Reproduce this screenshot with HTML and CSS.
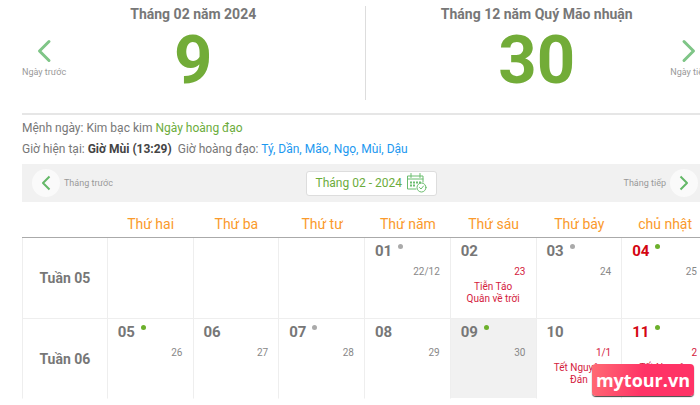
FILE: index.html
```html
<!DOCTYPE html>
<html lang="vi">
<head>
<meta charset="utf-8">
<title>Lịch tháng 02 - 2024</title>
<link rel="stylesheet" href="styles.css">
</head>
<body>
<main class="calendar">
  <section class="days">
    <div class="day">
      <h2>Tháng 02 năm 2024</h2>
      <p class="big">9</p>
      <a class="step prev" href="#"><svg width="16" height="24" viewBox="0 0 16 24"><path d="M13 2.500 3.500 12l9.500 9.500"/></svg><span>Ngày trước</span></a>
    </div>
    <div class="day">
      <h2>Tháng 12 năm Quý Mão nhuận</h2>
      <p class="big">30</p>
      <a class="step next" href="#"><svg width="16" height="24" viewBox="0 0 16 24"><path d="m3 2.500 9.500 9.500L3 21.500"/></svg><span>Ngày tiếp</span></a>
    </div>
  </section>
  <section class="info">
    <p>Mệnh ngày: Kim bạc kim <span class="good">Ngày hoàng đạo</span></p>
    <p>Giờ hiện tại: <b>Giờ Mùi (13:29)</b> <span class="hours">Giờ hoàng đạo: <span class="blue">Tý, Dần, Mão, Ngọ, Mùi, Dậu</span></span></p>
  </section>
  <nav class="bar">
    <a class="month" href="#"><span class="circle"><svg width="12" height="16" viewBox="0 0 12 16"><path d="M9.500 1.500 3 8l6.500 6.500"/></svg></span>Tháng trước</a>
    <button class="picker" type="button">Tháng 02 - 2024
      <svg width="21" height="20" viewBox="0 0 21 20"><path d="M10 16H1.500V3H17v6M1.500 6H17M5 .500v4M14 .500v4"/><path class="dots" d="M4 9.500h11M4 12.500h6"/><circle cx="15.500" cy="14.500" r="4.500"/><path d="m13.500 14.500 1.500 1.500 2.500-3"/></svg>
    </button>
    <a class="month" href="#">Tháng tiếp<span class="circle"><svg width="12" height="16" viewBox="0 0 12 16"><path d="M2.500 1.500 9 8l-6.500 6.500"/></svg></span></a>
  </nav>
  <table class="grid">
    <thead>
      <tr><td></td><th>Thứ hai</th><th>Thứ ba</th><th>Thứ tư</th><th>Thứ năm</th><th>Thứ sáu</th><th>Thứ bảy</th><th>chủ nhật</th></tr>
    </thead>
    <tbody>
      <tr>
        <th>Tuần 05</th>
        <td></td><td></td><td></td>
        <td><div class="num">01<i class="dot"></i></div><div class="lunar">22/12</div></td>
        <td><div class="num">02</div><div class="lunar red">23</div><div class="event">Tiễn Táo Quân về trời</div></td>
        <td><div class="num">03<i class="dot"></i></div><div class="lunar">24</div></td>
        <td><div class="num sun">04<i class="dot green"></i></div><div class="lunar">25</div></td>
      </tr>
      <tr>
        <th>Tuần 06</th>
        <td><div class="num">05<i class="dot green"></i></div><div class="lunar">26</div></td>
        <td><div class="num">06</div><div class="lunar">27</div></td>
        <td><div class="num">07<i class="dot"></i></div><div class="lunar">28</div></td>
        <td><div class="num">08</div><div class="lunar">29</div></td>
        <td class="today"><div class="num">09<i class="dot green"></i></div><div class="lunar">30</div></td>
        <td><div class="num">10</div><div class="lunar red">1/1</div><div class="event">Tết Nguyên Đán</div></td>
        <td><div class="num sun">11<i class="dot green"></i></div><div class="lunar red">2</div><div class="event">Tết Nguyên Đán</div></td>
      </tr>
    </tbody>
  </table>
</main>
<div class="badge">mytour.vn</div>
</body>
</html>
```
FILE: styles.css
```css
* { box-sizing: border-box; }
body {
  margin: 0;
  overflow: hidden;
  background: #fff;
  color: #777;
  font: 12px/20px Roboto, "Liberation Sans", sans-serif;
}
h2, p { margin: 0; }
a { color: inherit; text-decoration: none; }
svg { fill: none; stroke: #7fc587; stroke-width: 3; stroke-linecap: round; stroke-linejoin: round; }
.calendar { margin: 0 -8px 0 22px; }

.days {
  display: flex;
  padding: 6px 0 13px;
  border-bottom: 2px solid #e6e6e6;
}
.day {
  position: relative;
  flex: 1;
  height: 94px;
  text-align: center;
}
.day:first-child { border-right: 1px solid #ddd; }
.day h2 { font-size: 14px; line-height: 16px; font-weight: 700; }
.big { color: #72ac38; font-size: 67px; line-height: 76px; font-weight: 700; }
.step {
  position: absolute;
  top: 33px;
  display: flex;
  flex-direction: column;
  align-items: center;
  gap: 3px;
  color: #999;
  font-size: 9px;
  line-height: 12px;
}
.prev { left: 0; }
.next { right: 0; }

.info { padding: 3px 0 4px; line-height: 21px; }
.good { color: #6cac3c; }
.info b { color: #444; }
.hours { margin-left: 3px; }
.blue { color: #1c98f0; }

.bar {
  display: flex;
  align-items: center;
  justify-content: space-between;
  height: 38px;
  padding: 0 10px;
  background: #f1f1f1;
}
.month { display: flex; align-items: center; gap: 4px; color: #999; font-size: 9px; }
.circle {
  display: flex;
  align-items: center;
  justify-content: center;
  width: 28px;
  height: 28px;
  border-radius: 50%;
  background: #fafafa;
}
.circle svg { stroke-width: 2; stroke-linecap: butt; stroke: #64b868; }
.picker {
  display: flex;
  align-items: center;
  gap: 4px;
  height: 25px;
  margin-left: 6px;
  padding: 0 9px;
  border: 1px solid #ddd;
  border-radius: 3px;
  background: #fff;
  color: #6cac3c;
  font: 12px/20px Roboto, sans-serif;
}
.picker svg { stroke-width: 1; stroke: #6bbd6e; }
.picker .dots { stroke-width: 2; stroke-dasharray: 2 1; stroke-linecap: butt; }

.grid { width: 100%; table-layout: fixed; border-collapse: separate; border-spacing: 0; }
.grid td, .grid th { padding: 0; }
thead th, thead td { height: 36px; border-bottom: 1px solid #aaa; }
.grid thead th { padding-top: 8px; color: #fa9a2c; font-size: 14px; font-weight: 400; }
tbody tr { height: 81px; }
tbody th, tbody td { border-right: 1px solid #eee; border-bottom: 1px solid #eee; }
tbody th { border-left: 1px solid #eee; font-size: 14px; font-weight: 700; }
tbody td { vertical-align: top; }
tbody tr:last-child { height: 80px; }
tbody tr:last-child > * { border-bottom-color: #fff; }
.num {
  display: flex;
  gap: 6px;
  padding: 3px 0 0 10px;
  font-size: 15px;
  line-height: 20px;
  font-weight: 700;
}
.sun { color: #d40511; }
.dot { width: 5px; height: 5px; margin-top: 3px; border-radius: 50%; background: #aaa; }
.green { background: #6cb02c; }
.lunar { padding: 3px 10px 0 0; color: #888; font-size: 10px; line-height: 16px; text-align: right; }
.grid .red, .event { color: #d4213d; }
.event { padding: 1px 13px 0; font-size: 10px; line-height: 12px; text-align: center; }
.today { background: #f1f1f1; }

.badge {
  position: absolute;
  right: 6px;
  top: 364px;
  padding: 0 4px;
  border-radius: 4px;
  background: linear-gradient(100deg, #ff6b74, #ff3366 50%);
  box-shadow: 0 1px 1px #444;
  color: #fff;
  font: 700 18px/32px "Open Sans", sans-serif;
}
```
